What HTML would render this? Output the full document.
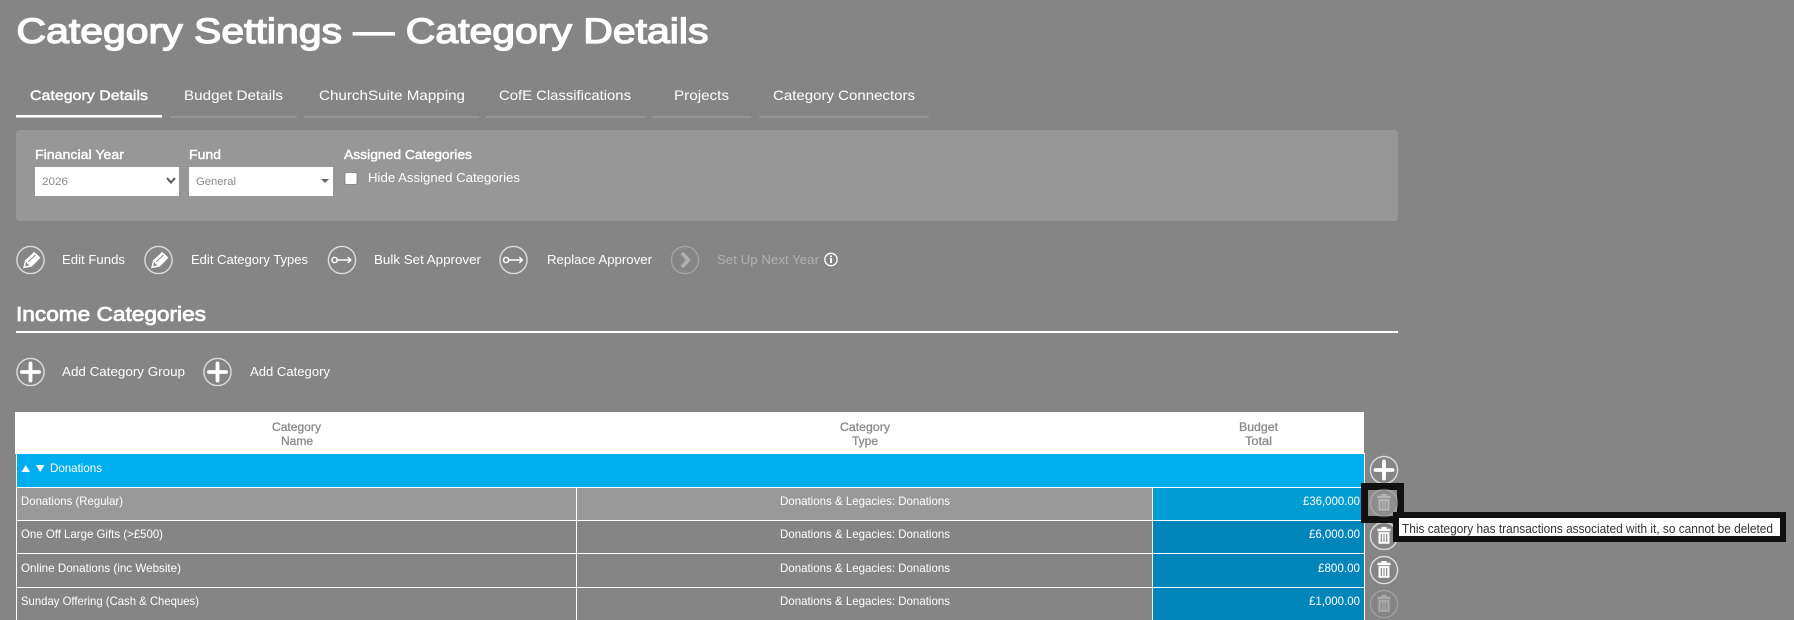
<!DOCTYPE html>
<html><head><meta charset="utf-8"><title>Category Settings</title>
<style>
html,body{margin:0;padding:0;background:#858585;width:1794px;height:620px;overflow:hidden}
svg{display:block}
text{font-family:"Liberation Sans",sans-serif;fill:#fff;font-size:13px}
.b{stroke:#fff;stroke-width:.4px}
.t{stroke:#fff;stroke-width:1.3px;font-size:35px}
.s{stroke:#fff;stroke-width:.75px;font-size:20px}
.h{fill:#8a8a8a;font-size:12px;stroke:#8a8a8a;stroke-width:.3px}
.r{font-size:12px}
.ci{fill:none;stroke:#dcdcdc;stroke-width:1.4}
</style></head><body>
<svg xmlns="http://www.w3.org/2000/svg" width="1794" height="620" viewBox="0 0 1794 620">
<defs>
<g id="pen"><circle class="ci" r="13.6"/><path fill="#fff" d="M-7.4 8.4L-5.6 .4-4 -1 3.6-8.2 10-2.4 2.6 5.2 1 6.6Z"/><path fill="#858585" d="M-5.4 6.4L-4.4 2.2-1.2 5.2Z"/><path stroke="#858585" stroke-width="1" fill="none" d="M-2.2 1.8L5-5"/></g>
<g id="key"><circle class="ci" r="13.6"/><circle r="2.6" cx="-7.4" cy="0" fill="none" stroke="#fff" stroke-width="1.5"/><path fill="none" stroke="#fff" stroke-width="1.5" d="M-4.8 0H8.8M5.8-3L8.8 0 5.8 3"/></g>
<g id="plus"><circle class="ci" r="13.6"/><path stroke="#fff" stroke-width="3.8" stroke-linecap="round" d="M-8.6 0H8.6M0-8.6V8.6"/></g>
<g id="chev"><circle class="ci" r="13.6"/><path fill="none" stroke="#fff" stroke-width="3.6" d="M-3-7L3.4 0-3 7"/></g>
<g id="trash"><circle class="ci" r="13.6"/><path fill="#fff" d="M-2.6-9H2.6V-7.3H6.6V-4.8H-6.6V-7.3H-2.6ZM-5.5-3.9H5.5V7.7H-5.5Z"/><path stroke="#858585" stroke-width="1.1" d="M-2.7-2V6M0-2V6M2.7-2V6"/></g>
</defs>

<rect width="1794" height="620" fill="#858585"/>

<!-- Title -->
<text x="16.5" y="43" class="t" textLength="692" lengthAdjust="spacingAndGlyphs">Category Settings — Category Details</text>

<!-- Tabs -->
<text x="30" y="100" class="b" style="font-size:14px" textLength="118" lengthAdjust="spacingAndGlyphs">Category Details</text>
<text x="184" y="100" style="font-size:14px" textLength="99" lengthAdjust="spacingAndGlyphs">Budget Details</text>
<text x="319" y="100" style="font-size:14px" textLength="146" lengthAdjust="spacingAndGlyphs">ChurchSuite Mapping</text>
<text x="499" y="100" style="font-size:14px" textLength="132" lengthAdjust="spacingAndGlyphs">CofE Classifications</text>
<text x="674" y="100" style="font-size:14px" textLength="55" lengthAdjust="spacingAndGlyphs">Projects</text>
<text x="773" y="100" style="font-size:14px" textLength="142" lengthAdjust="spacingAndGlyphs">Category Connectors</text>
<rect x="16" y="115" width="146" height="2.5" fill="#fff"/>
<g fill="#a3a3a3">
<rect x="170" y="116.5" width="127" height="1"/>
<rect x="304" y="116.5" width="175" height="1"/>
<rect x="486" y="116.5" width="159" height="1"/>
<rect x="652" y="116.5" width="99" height="1"/>
<rect x="759" y="116.5" width="170" height="1"/>
</g>

<!-- Filter panel -->
<rect x="16" y="130" width="1382" height="91" rx="4" fill="#979797"/>
<text x="35" y="159" class="b" textLength="89" lengthAdjust="spacingAndGlyphs">Financial Year</text>
<text x="189" y="159" class="b" textLength="32" lengthAdjust="spacingAndGlyphs">Fund</text>
<text x="344" y="159" class="b" textLength="128" lengthAdjust="spacingAndGlyphs">Assigned Categories</text>
<rect x="35" y="167" width="144" height="29" fill="#fff"/>
<rect x="189" y="167" width="144" height="29" fill="#fff"/>
<text x="42" y="185" style="fill:#888;font-size:11px" textLength="26" lengthAdjust="spacingAndGlyphs">2026</text>
<text x="196" y="185" style="fill:#888;font-size:11px" textLength="40" lengthAdjust="spacingAndGlyphs">General</text>
<path d="M167 178L171 182.5 175 178" fill="none" stroke="#555" stroke-width="2"/>
<path d="M321 179H329L325 183Z" fill="#666"/>
<rect x="345" y="172.5" width="12" height="12" rx="2" fill="#fff" stroke="#777" stroke-width=".7"/>
<text x="368" y="182" textLength="152" lengthAdjust="spacingAndGlyphs">Hide Assigned Categories</text>

<!-- Toolbar -->
<use href="#pen" x="30.5" y="260"/>
<text x="62" y="264" textLength="63" lengthAdjust="spacingAndGlyphs">Edit Funds</text>
<use href="#pen" x="158.5" y="260"/>
<text x="191" y="264" textLength="117" lengthAdjust="spacingAndGlyphs">Edit Category Types</text>
<use href="#key" x="342" y="260"/>
<text x="374" y="264" textLength="107" lengthAdjust="spacingAndGlyphs">Bulk Set Approver</text>
<use href="#key" x="513.5" y="260"/>
<text x="547" y="264" textLength="105" lengthAdjust="spacingAndGlyphs">Replace Approver</text>
<use href="#chev" x="685" y="260" opacity=".35"/>
<text x="717" y="264" opacity=".35" textLength="102" lengthAdjust="spacingAndGlyphs">Set Up Next Year</text>
<circle cx="831" cy="259.5" r="6.2" fill="none" stroke="#fff" stroke-width="1.3"/>
<rect x="830" y="258" width="2" height="5" fill="#fff"/><rect x="830" y="255.5" width="2" height="1.6" fill="#fff"/>

<!-- Income Categories -->
<text x="16" y="321" class="s" textLength="190" lengthAdjust="spacingAndGlyphs">Income Categories</text>
<rect x="16" y="331" width="1382" height="2" fill="#fff"/>
<use href="#plus" x="30.5" y="372"/>
<text x="62" y="376" textLength="123" lengthAdjust="spacingAndGlyphs">Add Category Group</text>
<use href="#plus" x="217.5" y="372"/>
<text x="250" y="376" textLength="80" lengthAdjust="spacingAndGlyphs">Add Category</text>

<!-- Table -->
<rect x="15" y="412" width="1349" height="42" fill="#fff"/>
<text x="272" y="431" class="h" textLength="49" lengthAdjust="spacingAndGlyphs">Category</text>
<text x="281" y="445" class="h" textLength="32" lengthAdjust="spacingAndGlyphs">Name</text>
<text x="840" y="431" class="h" textLength="50" lengthAdjust="spacingAndGlyphs">Category</text>
<text x="852" y="445" class="h" textLength="26" lengthAdjust="spacingAndGlyphs">Type</text>
<text x="1239" y="431" class="h" textLength="39" lengthAdjust="spacingAndGlyphs">Budget</text>
<text x="1245" y="445" class="h" textLength="27" lengthAdjust="spacingAndGlyphs">Total</text>

<rect x="17" y="454" width="1347" height="33" fill="#00aeef"/>
<rect x="17" y="488" width="559" height="32" fill="#999"/>
<rect x="577" y="488" width="575" height="32" fill="#999"/>
<rect x="1153" y="488" width="211" height="32" fill="#009dd3"/>
<rect x="1153" y="521" width="211" height="99" fill="#0085bb"/>
<g fill="#fff">
<rect x="16" y="453" width="1" height="167"/>
<rect x="1364" y="453" width="1" height="167"/>
<rect x="17" y="487" width="1347" height="1"/>
<rect x="17" y="520" width="1347" height="1"/>
<rect x="17" y="553" width="1347" height="1"/>
<rect x="17" y="587" width="1347" height="1"/>
<rect x="576" y="488" width="1" height="132"/>
<rect x="1152" y="488" width="1" height="132"/>
</g>
<path d="M21.5 472L25.7 465 30 472ZM36 465H44.5L40.2 472Z" fill="#fff"/>
<text x="50" y="472" class="r" textLength="52" lengthAdjust="spacingAndGlyphs">Donations</text>

<text x="21" y="505" class="r" textLength="102" lengthAdjust="spacingAndGlyphs">Donations (Regular)</text>
<text x="21" y="538" class="r" textLength="142" lengthAdjust="spacingAndGlyphs">One Off Large Gifts (&gt;£500)</text>
<text x="21" y="572" class="r" textLength="160" lengthAdjust="spacingAndGlyphs">Online Donations (inc Website)</text>
<text x="21" y="605" class="r" textLength="178" lengthAdjust="spacingAndGlyphs">Sunday Offering (Cash &amp; Cheques)</text>

<text x="780" y="505" class="r" textLength="170" lengthAdjust="spacingAndGlyphs">Donations &amp; Legacies: Donations</text>
<text x="780" y="538" class="r" textLength="170" lengthAdjust="spacingAndGlyphs">Donations &amp; Legacies: Donations</text>
<text x="780" y="572" class="r" textLength="170" lengthAdjust="spacingAndGlyphs">Donations &amp; Legacies: Donations</text>
<text x="780" y="605" class="r" textLength="170" lengthAdjust="spacingAndGlyphs">Donations &amp; Legacies: Donations</text>

<text x="1303" y="505" class="r" textLength="57" lengthAdjust="spacingAndGlyphs">£36,000.00</text>
<text x="1309" y="538" class="r" textLength="51" lengthAdjust="spacingAndGlyphs">£6,000.00</text>
<text x="1318" y="572" class="r" textLength="42" lengthAdjust="spacingAndGlyphs">£800.00</text>
<text x="1309" y="605" class="r" textLength="51" lengthAdjust="spacingAndGlyphs">£1,000.00</text>

<!-- Row actions -->
<use href="#plus" x="1384" y="470"/>
<use href="#trash" x="1384" y="536"/>
<use href="#trash" x="1384" y="570"/>
<use href="#trash" x="1384" y="604" opacity=".3"/>

<!-- Focus outline on first delete -->
<rect x="1364.5" y="486.5" width="36" height="33" fill="#8d8d8d" stroke="#111" stroke-width="7"/>
<use href="#trash" x="1384" y="503" opacity=".35"/>

<!-- Tooltip -->
<rect x="1396" y="515" width="387" height="24" fill="#fff" stroke="#111" stroke-width="6"/>
<text x="1402" y="533" style="fill:#333;font-size:12.5px" textLength="371" lengthAdjust="spacingAndGlyphs">This category has transactions associated with it, so cannot be deleted</text>
</svg>
</body></html>
